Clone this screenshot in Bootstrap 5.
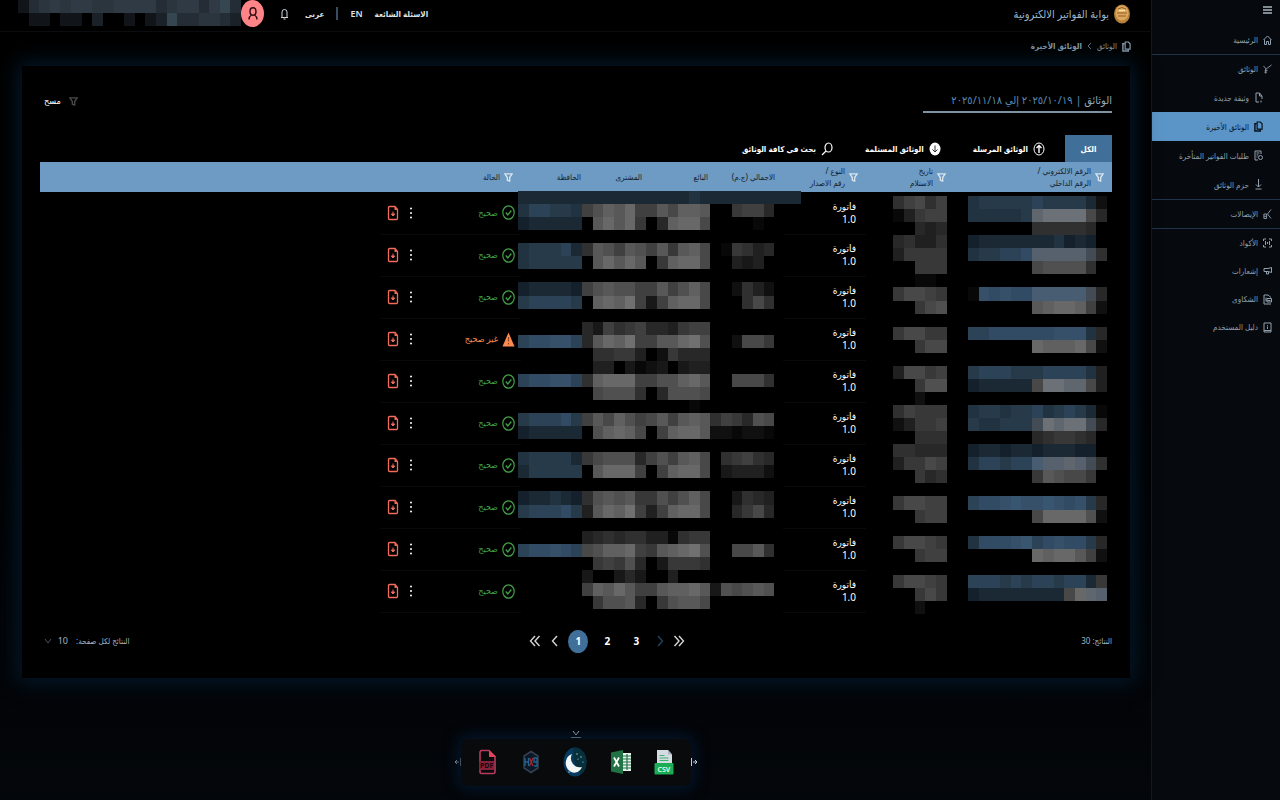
<!DOCTYPE html>
<html lang="ar" dir="rtl">
<head>
<meta charset="utf-8">
<meta name="viewport" content="width=device-width, initial-scale=1">
<title>بوابة الفواتير الالكترونية</title>
<link rel="stylesheet" href="https://cdn.jsdelivr.net/npm/bootstrap@5.3.0/dist/css/bootstrap.min.css">
<style>
body{background:linear-gradient(180deg,#000 40%,#03060a 100%);color:#fff;font-family:"Noto Sans","DejaVu Sans Condensed","DejaVu Sans",sans-serif;font-size:9px;line-height:12px}
svg{display:block;flex:none}
a,button{color:inherit;text-decoration:none}
button{background:none;border:0;padding:0}
.side-menu{width:128px;flex:none;background:#060a0e;color:#93a0ad;box-shadow:-1px 0 0 #151719}
.side-menu ul{margin:0;padding:0;list-style:none}
.menu-top{height:26px;padding:4px 8px}
.menu-link{display:flex;align-items:center;gap:5px;height:28px;padding:0 8px;font-size:8px;white-space:nowrap}
.menu-sub{height:29px;padding:0 17px}
.menu-now{background:#5b94c6;color:#07121d}
.menu-line{border-top:1px solid #1f3448}
.top-bar{height:32px;padding:0 21px 4px 18px;border-bottom:1px solid #0b0c0e}
.brand-name{font-size:11px;color:#9db6cc}
.top-tools{gap:12px;font-weight:700;font-size:8px;color:#dfe5ea}
.lang-en{font-size:9px;font-weight:600}
.face{width:23px;height:27px;border-radius:50%;background:#ff8488;color:#2a0c0e}
.crumbs{height:34px;padding:0 21px 6px;gap:5px;font-size:8px;color:#8ba0b4}
.sheet{margin:0 22px;padding:0 18px;background:#000;box-shadow:0 0 20px 4px #04192b}
.sheet-head{height:69px;padding-top:25px}
.sheet-title{width:189px;height:22px;border-bottom:2px solid #7f92a2;font-size:11px;line-height:18px;color:#5b8cb6;white-space:nowrap;font-weight:400}
.tab-row{height:27px}
.tab-row button{display:flex;align-items:center;gap:5px;height:27px;margin-inline-start:32px;font-size:8px;font-weight:700;white-space:nowrap}
.tab-row .tab-on{width:47px;margin:0;justify-content:center;background:#40709a}
.tab-row .tab-on + button{margin-inline-start:20px}
.doc-table{width:100%;table-layout:fixed;border-collapse:collapse}
.doc-table thead tr{height:30px;background:#6d9bc4;color:#13202d;font-size:8px;line-height:12px}
.doc-table th,.doc-table td{padding:0 8px 0 0;vertical-align:middle;white-space:nowrap}
.doc-table th{font-weight:400}
.doc-table tbody tr{height:42px}
.doc-table td{border-bottom:1px solid #090909}
.doc-table td.bare{border:0}
.doc-table td.kind{padding-right:10px;font-size:10px;line-height:13px}
.doc-table td button{display:block}
.good{color:#43a047}
.bad{color:#ff8a50}
.doc-table td.state-cell{padding-right:6px}
.state{display:flex;align-items:center;gap:4px}
.veil-main{position:absolute;right:311px;top:29px}
.veil-date{position:absolute;right:165px;top:34px}
.veil-id{position:absolute;right:5px;top:34px}
.foot-bar{height:65px;padding-bottom:8px;font-size:8px;color:#a4b3c1}
.pager{gap:9px;color:#fff;font-size:10px;font-weight:700}
.pager button{width:20px;height:23px;display:flex;align-items:center;justify-content:center;font-weight:700}
.pager .page-step{width:10px}
.pager .page-on{border-radius:50%;background:#40709a}
.size-pick{appearance:none;background:none;border:0;color:inherit;font-size:9px;padding:0;width:12px}
.dock{width:230px;height:47px;padding:0 17px;border-radius:8px;background:#090a0b;box-shadow:0 0 14px 4px #04152a}
</style>
</head>
<body>
<svg width="0" height="0" class="position-absolute" aria-hidden="true">
 <defs>
 <symbol id="i-funnel" viewBox="0 0 10 11"><path d="M1 1.500h8L6.300 5.500V9.500L3.700 8.500v-3z" fill="none" stroke="currentColor" stroke-width="1.500"/></symbol>
 <symbol id="i-docs" viewBox="0 0 10 12"><path d="M3.500 1H7l2 2v6H3.500z" fill="none" stroke="currentColor" stroke-width="1.300"/><path d="M3 3H1v8h6V9" fill="none" stroke="currentColor" stroke-width="1.600"/></symbol>
 <symbol id="i-pdf" viewBox="0 0 12 16"><path d="M2.500 1.500H8L10.500 4.500v9q0 1-1 1h-7q-1 0-1-1v-11q0-1 1-1z" fill="none" stroke="currentColor" stroke-width="1.300"/><path d="M7.500 1.500v3.500h3z" fill="currentColor"/><path d="M6 6.500v4M4.300 9L6 11l1.700-2z" fill="currentColor" stroke="currentColor"/></symbol>
 <symbol id="i-ok" viewBox="0 0 13 15"><ellipse cx="6.500" cy="7.500" rx="5.700" ry="6.700" fill="none" stroke="currentColor" stroke-width="1.200"/><path d="M3.800 7.500l2 2.500 3.500-4.500" fill="none" stroke="currentColor" stroke-width="1.300"/></symbol>
 <symbol id="i-warn" viewBox="0 0 13 15"><path d="M6.500 .5L12.500 14.500H.5z" fill="currentColor"/><path d="M6.500 5v4.500M6.500 11v1.500" stroke="#8a4520" stroke-width="1.200"/></symbol>
 <symbol id="i-dots" viewBox="0 0 4 12"><circle cx="2" cy="1.500" r="1" fill="currentColor"/><circle cx="2" cy="6" r="1" fill="currentColor"/><circle cx="2" cy="10.500" r="1" fill="currentColor"/></symbol>
 </defs>
</svg>
<div class="d-flex min-vh-100">
 <aside class="side-menu">
  <div class="menu-top"><button type="button" aria-label="القائمة"><svg width="9" height="12" viewBox="0 0 9 12" stroke="#aab4bd" stroke-width="1.300"><path d="M0 3h9M0 6h9M0 9h9"/></svg></button></div>
  <nav><ul>
   <li><a href="#" class="menu-link"><svg width="9" height="10" viewBox="0 0 9 10" fill="none" stroke="currentColor"><path d="M.5 5L4.500 1 8.500 5M1.500 4.500v5h2v-3h2v3h2v-5"/></svg>الرئيسية</a></li>
   <li class="menu-line"><a href="#" class="menu-link"><svg width="9" height="12" viewBox="0 0 10 12" fill="none" stroke="currentColor"><path d="M.5 2.500l3 3.500L9.500 1.500M3 6v5M2 7.500h3M1.500 9.500h3"/></svg>الوثائق</a></li>
   <li><a href="#" class="menu-link menu-sub"><svg width="9" height="11" viewBox="0 0 9 11" fill="none" stroke="currentColor"><path d="M5 10H2V1h3.500L8 4v3M5.500 1v3H8M7 8.500v2"/></svg>وثيقة جديدة</a></li>
   <li><a href="#" class="menu-link menu-sub menu-now"><svg width="9" height="11"><use href="#i-docs"/></svg>الوثائق الأخيرة</a></li>
   <li><a href="#" class="menu-link menu-sub"><svg width="9" height="11" viewBox="0 0 9 11" fill="none" stroke="currentColor"><path d="M7 4V1H1v9h3M2.500 3h3M2.500 5h2M2.500 7h1"/><circle cx="6.500" cy="7.500" r="2"/></svg>طلبات الفواتير المتأخرة</a></li>
   <li><a href="#" class="menu-link menu-sub"><svg width="9" height="11" viewBox="0 0 9 11" fill="none" stroke="currentColor"><path d="M4.500 0v8M2 5.500L4.500 8 7 5.500M1.500 10h6"/></svg>حزم الوثائق</a></li>
   <li class="menu-line"><a href="#" class="menu-link"><svg width="9" height="12" viewBox="0 0 10 12" fill="none" stroke="currentColor"><path d="M9 1L5 6l4 5M1 6h3v5H1zM1 8.500h3"/></svg>الإيصالات</a></li>
   <li class="menu-line"><a href="#" class="menu-link"><svg width="9" height="10" viewBox="0 0 9 10" fill="none" stroke="currentColor"><path d="M.5 3V1H3M6 1h2.500v2M.5 7v2H3M6 9h2.500V7M2.500 3v4M4.500 4v2M6.500 3v4"/></svg>الأكواد</a></li>
   <li><a href="#" class="menu-link"><svg width="9" height="10" viewBox="0 0 9 10" fill="none" stroke="currentColor"><path d="M8.500 1.500v5L5 5.500H1v-3h4zM3.500 5.500V8H5.500V6"/></svg>إشعارات</a></li>
   <li><a href="#" class="menu-link"><svg width="9" height="11" viewBox="0 0 9 11" fill="none" stroke="currentColor"><path d="M8 10H1V1h4l3 2.500M3 3.500v4M4 4.500h4.500v3.500H4zM4.500 6.500h3"/></svg>الشكاوى</a></li>
   <li><a href="#" class="menu-link"><svg width="9" height="11" viewBox="0 0 9 11" fill="none" stroke="currentColor"><path d="M1 1h7v9H1zM1 8.500h7M4.500 3v.8M4.500 4.500V7"/></svg>دليل المستخدم</a></li>
  </ul></nav>
 </aside>

 <div class="flex-grow-1 d-flex flex-column" style="min-width:0">
  <header class="top-bar d-flex align-items-center justify-content-between">
   <a href="#" class="d-flex align-items-center gap-1 brand-name"><svg width="18" height="20" viewBox="0 0 18 20"><ellipse cx="9" cy="10" rx="8" ry="9.500" fill="#b8803a"/><ellipse cx="9" cy="9" rx="6.500" ry="7.500" fill="#dca75c"/><path d="M5 5q4-3 8 0M4 9h10M5 12h8" stroke="#8e5d24" fill="none"/><path d="M6 6.500h6" stroke="#ffe0a0" stroke-width="1.500"/></svg><span>بوابة الفواتير الالكترونية</span></a>
   <div class="d-flex align-items-center top-tools">
    <a href="#">الاسئلة الشائعة</a>
    <a href="#" class="lang-en">EN</a>
    <svg width="2" height="13"><path d="M1 0v13" stroke="#6d9bc4" stroke-width="1"/></svg>
    <a href="#">عربى</a>
    <button type="button" class="mx-1" aria-label="التنبيهات"><svg width="9" height="12" viewBox="0 0 9 12" fill="none" stroke="#cfd6db"><path d="M1 9.500h7M2 9.500V4q0-2.500 2.500-2.500T7 4v5.500M3.500 11h2"/></svg></button>
    <div class="d-flex">
     <button type="button" class="face d-flex align-items-center justify-content-center" aria-label="الحساب"><svg width="10" height="13" viewBox="0 0 10 13" fill="none" stroke="currentColor" stroke-width="1.400"><ellipse cx="5" cy="4.500" rx="3" ry="3.700"/><path d="M1 12.500q0-3 2.500-4.500M9 12.500Q9 9.500 6.500 8"/></svg></button>
     <svg id="userVeil" width="223" height="26" aria-hidden="true"></svg>
    </div>
   </div>
  </header>

  <nav class="crumbs d-flex align-items-center"><svg width="9" height="11"><use href="#i-docs"/></svg><a href="#">الوثائق</a><svg width="5" height="8" viewBox="0 0 5 8" fill="none" stroke="#667a8c"><path d="M4 1L1 4l3 3"/></svg><b>الوثائق الأخيرة</b></nav>

  <main class="sheet">
   <div class="sheet-head d-flex justify-content-between align-items-start">
    <h1 class="sheet-title mb-0"><span style="color:#9aa9b6">الوثائق</span> | ٢٠٢٥/١٠/١٩ إلي ٢٠٢٥/١١/١٨</h1>
    <button type="button" class="d-flex align-items-center gap-2 px-1 pt-1"><svg width="9" height="11" style="color:#4a4a4a"><use href="#i-funnel"/></svg><span>مسح</span></button>
   </div>
   <div class="tab-row d-flex">
    <button type="button" class="tab-on">الكل</button>
    <button type="button"><svg width="12" height="14" viewBox="0 0 12 14" fill="none" stroke="#fff"><ellipse cx="6" cy="7" rx="5" ry="6"/><path d="M6 11V3.500M3.500 6L6 3.500 8.500 6" stroke-width="1.400"/></svg>الوثائق المرسلة</button>
    <button type="button"><svg width="12" height="14" viewBox="0 0 12 14" fill="none" stroke="#333"><ellipse cx="6" cy="7" rx="5.500" ry="6.500" fill="#fff" stroke="none"/><path d="M6 3.500V10M3.500 7.500L6 10l2.500-2.500"/></svg>الوثائق المستلمة</button>
    <button type="button"><svg width="12" height="14" viewBox="0 0 12 14" fill="none" stroke="#fff" stroke-width="1.200"><ellipse cx="7.500" cy="5.500" rx="3.500" ry="4.500"/><path d="M5 9L1 13"/></svg>بحث في كافة الوثائق</button>
   </div>
   <div class="position-relative">
    <table class="doc-table">
     <colgroup><col style="width:158px"><col style="width:88px"><col style="width:83px"><col style="width:67px"><col style="width:66px"><col style="width:61px"><col style="width:68px"><col style="width:100px"><col style="width:14px"><col style="width:27px"><col></colgroup>
     <thead><tr>
      <th><div class="d-flex align-items-center gap-1"><svg width="9" height="11" color="#d9e4ee"><use href="#i-funnel"/></svg><span>الرقم الالكتروني /<br>الرقم الداخلي</span></div></th>
      <th><div class="d-flex align-items-center gap-1"><svg width="9" height="11" color="#d9e4ee"><use href="#i-funnel"/></svg><span>تاريخ<br>الاستلام</span></div></th>
      <th><div class="d-flex align-items-center gap-1"><svg width="9" height="11" color="#d9e4ee"><use href="#i-funnel"/></svg><span>النوع /<br>رقم الاصدار</span></div></th>
      <th>الاجمالي (ج.م)</th><th>البائع</th><th>المشترى</th><th>الحافظة</th>
      <th><div class="d-flex align-items-center gap-1"><svg width="9" height="11" color="#d9e4ee"><use href="#i-funnel"/></svg><span>الحالة</span></div></th>
      <th></th><th></th><th></th>
     </tr></thead>
     <tbody id="docRows"></tbody>
    </table>
    <svg id="mainVeil" class="veil-main" width="283" height="418" aria-hidden="true"></svg>
    <svg id="dateVeil" class="veil-date" width="54" height="418" aria-hidden="true"></svg>
    <svg id="idVeil" class="veil-id" width="139" height="418" aria-hidden="true"></svg>
   </div>
   <div class="foot-bar d-flex align-items-center justify-content-between">
    <div>النتائج: 30</div>
    <nav class="pager d-flex align-items-center" dir="ltr" aria-label="الصفحات">
     <button type="button" class="page-step" aria-label="الأخيرة"><svg width="12" height="12" viewBox="0 0 12 12" fill="none" stroke="#d5d5d5" stroke-width="1.400"><path d="M6 1L1.500 6 6 11M10.500 1L6 6l4.500 5"/></svg></button>
     <button type="button" class="page-step" aria-label="التالية"><svg width="7" height="12" viewBox="0 0 7 12" fill="none" stroke="#d5d5d5" stroke-width="1.400"><path d="M6 1L1.500 6 6 11"/></svg></button>
     <button type="button" class="page-on">1</button><button type="button">2</button><button type="button">3</button>
     <button type="button" class="page-step" aria-label="السابقة"><svg width="7" height="12" viewBox="0 0 7 12" fill="none" stroke="#22425f" stroke-width="1.400"><path d="M1 1l4.500 5L1 11"/></svg></button>
     <button type="button" class="page-step" aria-label="الأولى"><svg width="12" height="12" viewBox="0 0 12 12" fill="none" stroke="#d5d5d5" stroke-width="1.400"><path d="M1.500 1L6 6l-4.500 5M6 1l4.500 5L6 11"/></svg></button>
    </nav>
    <div class="d-flex align-items-center gap-2 px-1"><label for="perPage">النتائج لكل صفحة:</label><span class="d-flex align-items-center gap-1"><select id="perPage" class="size-pick"><option>10</option></select><svg width="8" height="6" viewBox="0 0 8 6" fill="none" stroke="#4b555f"><path d="M1 1l3 4 3-4"/></svg></span></div>
   </div>
  </main>

  <div class="mx-auto mt-5 pt-1 d-flex flex-column align-items-center">
   <svg width="10" height="9" viewBox="0 0 10 9" fill="none" stroke="#d8dde2"><path d="M2 1l3 4 3-4M0 7.500h10"/></svg>
   <div class="d-flex align-items-center" dir="ltr">
    <svg width="7" height="10" viewBox="0 0 7 10" fill="none" stroke="#c8ced4"><path d="M6.500 1v8M5 5H1M3 3L1 5l2 2"/></svg>
    <div class="dock d-flex align-items-center justify-content-between">
     <button type="button" aria-label="PDF"><svg width="20" height="26" viewBox="0 0 20 26"><path d="M3 1.500h8l6 6V23q0 1.500-1.500 1.500h-12Q2 24.500 2 23V3z" fill="none" stroke="#b83a5c" stroke-width="1.600"/><path d="M11 1v7h7z" fill="#e0455c"/><path d="M1 12h15v9H1z" fill="#86213a"/><text x="2" y="19" font-size="7" font-weight="700" fill="#18060c">PDF</text></svg></button>
     <button type="button" aria-label="HX9"><svg width="20" height="24" viewBox="0 0 20 24"><path d="M10 1.500l7 4.500v12l-7 4.500L3 18V6z" fill="#0c1826" stroke="#344151" stroke-width="1.500"/><path d="M4 8v8M4 12h3.500M7.500 8v8M13 8h3v4h-3zM16 12v4h-3" stroke="#236493" stroke-width="1.300" fill="none"/><path d="M8.500 8l3.500 8M12 8l-3.500 8" stroke="#a52b2b" stroke-width="1.300"/></svg></button>
     <button type="button" aria-label="الوضع الليلي"><svg width="24" height="30" viewBox="0 0 24 30"><ellipse cx="12" cy="15" rx="11.500" ry="14.500" fill="#083a60"/><path d="M11 .5q12 1 12.500 14.500-1 9-6 12Q8 14 11 .5" fill="#05303c"/><path d="M9 7a8.500 9.500 0 1 0 10 13A9 9 0 0 1 9 7z" fill="#f2f7f5"/><g fill="#b9d4cf"><circle cx="14" cy="7" r=".7"/><circle cx="18" cy="10" r=".7"/><circle cx="15" cy="12" r=".6"/><circle cx="20" cy="15" r=".6"/><circle cx="6" cy="25" r=".7"/></g></svg></button>
     <button type="button" aria-label="Excel"><svg width="22" height="26" viewBox="0 0 22 26"><path d="M11 4h10v18H11z" fill="#e9f2ec"/><path d="M13 7h8M13 10h8M13 13h8M13 16h8M13 19h8M17 5v16" stroke="#217346" stroke-width="1.200"/><path d="M1 3.500L13 1v24L1 22.500z" fill="#217346"/><path d="M4 8.500l5 9M9 8.500l-5 9" stroke="#fff" stroke-width="1.800"/></svg></button>
     <button type="button" aria-label="CSV"><svg width="20" height="26" viewBox="0 0 20 26"><path d="M3 1h11l4 4.500V14H3z" fill="#d5dbe3"/><path d="M14 1v4.500h4z" fill="#a9b4c2"/><path d="M5.500 6.500h5M5.500 9h9M5.500 11.500h9" stroke="#3bb36c"/><rect x=".5" y="14" width="19" height="11.500" rx="1" fill="#1cac56"/><text x="3.500" y="22.500" font-size="7" font-weight="600" fill="#eafff2">CSV</text></svg></button>
    </div>
    <svg width="7" height="10" viewBox="0 0 7 10" fill="none" stroke="#c8ced4"><path d="M.5 1v8M2 5h4M4 3l2 2-2 2"/></svg>
   </div>
  </div>
 </div>
</div>
<script src="https://cdn.jsdelivr.net/npm/bootstrap@5.3.0/dist/js/bootstrap.bundle.min.js"></script>
<script>
// One entry per invoice: true when the document is valid
const valid = [true, true, true, false, true, true, true, true, true, true];
document.getElementById('docRows').innerHTML = valid.map(ok => `<tr><td class="bare"></td><td class="bare"></td>
<td class="kind">فاتورة<br>1.0</td><td class="bare"></td><td class="bare"></td><td class="bare"></td><td class="bare"></td>
<td class="state-cell"><div class="state ${ok ? 'good' : 'bad'}"><svg width="13" height="15"><use href="#${ok ? 'i-ok' : 'i-warn'}"/></svg><span>${ok ? 'صحيح' : 'غير صحيح'}</span></div></td>
<td><button type="button" aria-label="خيارات"><svg width="4" height="12"><use href="#i-dots"/></svg></button></td>
<td><button type="button" aria-label="تنزيل" style="color:#f26b5b"><svg width="12" height="16"><use href="#i-pdf"/></svg></button></td><td class="bare"></td></tr>`).join('');

// Private values are covered by mosaics: 0-f are greys, capitals are tints
const tint = {A:'#14202b',B:'#1b2935',C:'#213240',D:'#273a4a',E:'#2c4257',F:'#324b64',G:'#365069',H:'#385670',K:'#495d72',M:'#60666e',N:'#6c7177',P:'#56616d',Q:'#434b55',R:'#11151a',S:'#1b2129',T:'#242c35',U:'#2b353e',V:'#2f3a44',W:'#364650'};
function mosaic(id, cols, rows, lines) {
  const el = document.getElementById(id);
  el.setAttribute('viewBox', `0 0 ${cols} ${rows}`);
  el.setAttribute('preserveAspectRatio', 'none');
  el.setAttribute('shape-rendering', 'crispEdges');
  el.innerHTML = lines.map((line, y) => [...line].map((c, x) => {
    if (c === '.') return '';
    const g = parseInt(c, 16) * 8;
    return `<rect x="${x}" y="${y}" width="1" height="1" fill="${tint[c] || `rgb(${g},${g},${g})`}"/>`;
  }).join('')).join('');
}
mosaic('userVeil', 21, 2, ['RTUVUVVUUVVVVTUVVTVWT', '.RR.RR.S..R.RSWTTUUTS']);
mosaic('mainVeil', 26.5, 32, [
 'BBBBBBBBBBBBBBBBCBBBBBBBBBB','CEEDDC8acbd88b9ccb..7885','ABBBBB.bdbd7.5cdd9....1.','',
 'CDDDEB6ba8ba8b7bc9.17645','CDDDDD.bdbdb.7cdd9..434.','','ABBBBA8abaa88b8ac9..2642',
 'DEEEED.cdce838cdd9...696','','......538678554788','EFFGGE5bdce88bbdea..2997',
 '.......66774.27555','.......44.31230344','EFFGGE6cddd88aacdb..9996','.......9aaa6.5aaa9',
 '................1.','DEEEFD8b9ca89b8bcb6875a9','ABBBBB.acdc9.8cddb221221','',
 'CDDDDB79aaa58a8bc9.67865','BDDDDD.bddd8.8cdd9.34442','','ABBCBA6abab77a8ac9..3654',
 'DEEEFD4bdce848cdd9..5795','','......456566441677','EFFGFE9accd87bcdea..99b6',
 '.......787a5.37776','......3..353..4...','......8cbdb88bccdb3a9aba','.......7aab5.7abb9']);
mosaic('dateVeil', 5, 32, ['68968','14788','..545','56446','47777','..777','..11.','79987','..79a','','79977','..799','','49978','..7aa','..2..','68777','24778','..666','66555','47798','..756','','79988','..788','','79987','..788','','79987','..797','..2..']);
mosaic('idVeil', 13, 32, ['CDDDDDEDDDDB2','CCCCCDMNNNN95','......666665.','ABBBBBBBCABA.','CDDEEFPPPPPQ6','......9aaaa6.','','1GFGFFKKKKKQ5','......bcddc82','','EEFFFFFFGGGC5','......dcccd92','','DEEEDDDEEEEC4','ABBBBB9NNMM94','','CDDCDDECDEDB1','DCCDDDQNMNNQ5','......567765.','ABBABBABBBAA.','CEEDEEKPPMPQ6','......7ba997.','','EFFGHGGHGFGD5','......9dddda2','','CFFFGHEFGFFD5','......dcddb82','','EEEDEDEEDEEB7','ABBBBBBBB9dMP']);
</script>
</body>
</html>
